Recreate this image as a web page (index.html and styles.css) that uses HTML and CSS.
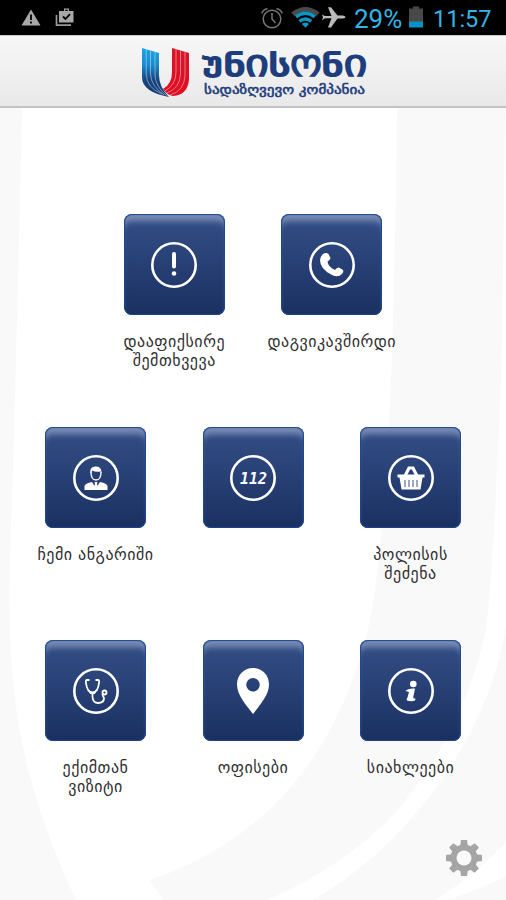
FILE: index.html
```html
<!DOCTYPE html>
<html lang="ka">
<head>
    <meta charset="utf-8">
    <title>უნისონი</title>
    <link rel="stylesheet" href="styles.css">
</head>
<body>
    <div class="statusbar">
        <svg class="status-left" width="60" height="35" viewBox="0 0 60 35">
            <path d="M11 9.500L20.500 25.500H1.500Z" fill="#a8a8a8"/>
            <path d="M11 14.500V20M11 21.500V23.500" stroke="#000" stroke-width="1.800"/>
            <path d="M36.500 15V25.200H51" fill="none" stroke="#999" stroke-width="1.700"/>
            <path d="M39 11H44V8.500H49V11H53.500V22.500H39Z" fill="#a8a8a8"/>
            <path d="M45.200 11V9.700H47.800V11" fill="#000"/>
            <path d="M43 16.500L45.500 19L50 14.200" fill="none" stroke="#000" stroke-width="1.800"/>
        </svg>
        <svg class="status-icons" width="90" height="35" viewBox="0 0 90 35">
            <g fill="none" stroke="#777" stroke-width="1.500">
                <circle cx="12" cy="19" r="8.800"/>
                <path d="M12 13V19L15.500 23M1.800 13.500Q3 9.500 7.500 8.800M16.500 8.800Q21 9.500 22.200 13.500"/>
            </g>
            <path d="M31.300 12.500Q45.500 1.500 59.500 12.500L56.500 16Q45.500 7.500 34.300 16Z" fill="#4a4a4a"/>
            <g fill="none" stroke="#0b96c8" stroke-width="3.400">
                <path d="M36 16.800Q45.500 9.500 54.800 16.800"/>
                <path d="M39.500 21.300Q45.500 16.800 51.200 21.300"/>
            </g>
            <path d="M41.800 24Q45.500 21.200 49 24L45.500 27.700Z" fill="#0b96c8"/>
            <path d="M62 14.500L65 16H71.500L68 7.300H71L77.500 15.500H83Q85.500 16 85.500 17Q85.500 18 83 18.500H77.500L71 27.500H68L71.500 18.300H65L62 20.200L63 17.300Z" fill="#bbb"/>
        </svg>
        <span class="battery-text">29%</span>
        <svg class="battery" width="14" height="35" viewBox="0 0 14 35">
            <path d="M0 8.500H4V6.500H10V8.500H14V22H0Z" fill="#484848"/>
            <path d="M0 21.500H14V27.500H0Z" fill="#0891c4"/>
        </svg>
        <span class="clock">11:57</span>
    </div>

    <div class="header">
        <svg class="logo" width="230" height="60" viewBox="0 0 230 60">
            <defs>
                <linearGradient id="blue" x1="0" y1="0" x2="0" y2="1">
                    <stop offset="0" stop-color="#1ca4e4"/>
                    <stop offset=".35" stop-color="#188acb"/>
                    <stop offset=".65" stop-color="#17457f"/>
                    <stop offset="1" stop-color="#163a72"/>
                </linearGradient>
                <linearGradient id="red" x1="0" y1="0" x2="0" y2="1">
                    <stop offset="0" stop-color="#dc1626"/>
                    <stop offset="1" stop-color="#e20b22"/>
                </linearGradient>
            </defs>
            <path d="M4 6L21 11V33Q21 45 31 55Q4 50 4 35Z" fill="url(#blue)"/>
            <path d="M34 6L51 11V37Q50 53 35 54Q29 53 25 47Q34 42 34 30Z" fill="url(#red)"/>
            <g fill="none" stroke="#dce9f6" stroke-width=".5">
                <path d="M8.200 7V32Q8.500 46 24 52"/>
                <path d="M12.500 9V32Q13 44 26 53"/>
                <path d="M17 10V33Q17.500 45 29 54"/>
                <path d="M38 7V30Q38 43 27 49"/>
                <path d="M42.500 9V32Q42 46 29 51"/>
                <path d="M47 10V34Q46 49 32 53"/>
            </g>
            <text class="logo-name"><tspan class="low" x="65" y="28.500" textLength="19" lengthAdjust="spacingAndGlyphs">უ</tspan><tspan class="high" x="86" y="34" textLength="21" lengthAdjust="spacingAndGlyphs">ნ</tspan><tspan class="mid" x="107" y="34" textLength="24" lengthAdjust="spacingAndGlyphs">ი</tspan><tspan class="high" x="131" y="34" textLength="21" lengthAdjust="spacingAndGlyphs">ს</tspan><tspan class="mid" x="152" y="34" textLength="32" lengthAdjust="spacingAndGlyphs">ო</tspan><tspan class="high" x="184" y="34" textLength="21" lengthAdjust="spacingAndGlyphs">ნ</tspan><tspan class="mid" x="205.500" y="34" textLength="24" lengthAdjust="spacingAndGlyphs">ი</tspan></text>
            <text class="logo-sub" x="66" y="52" textLength="161" lengthAdjust="spacingAndGlyphs">სადაზღვევო კომპანია</text>
        </svg>
    </div>

    <div class="content">
        <svg class="backdrop" width="506" height="792" viewBox="0 108 506 792">
            <g fill="#f9f9f9">
                <path d="M0 108H22Q19 260 12 500C6 650 5 750 76 900H0Z"/>
                <path d="M397 108H505Q503 350 496 560C487 710 400 850 276 900H163L150 880C280 835 340 740 368 630C385 550 394 400 397 108Z"/>
                <path d="M506 626C490 730 405 850 277 900H436Q478 872 506 842Z"/>
                <path d="M506 876V900H447Q480 890 506 876Z"/>
            </g>
            <path d="M503 400L506 400V626C490 735 407 847 313 900H268C390 846 470 750 487 620Q495 540 500 400Z" fill="#fff"/>
        </svg>

        <div class="row">
            <div class="item">
                <div class="tile">
                    <svg width="48" height="48" viewBox="0 0 48 48">
                        <circle class="ring" cx="24" cy="24" r="21.700"/>
                        <path d="M24 13V25.500" stroke="#fff" stroke-width="4" stroke-linecap="round"/>
                        <circle cx="24" cy="32.500" r="2.300" fill="#fff"/>
                    </svg>
                </div>
                <div class="label">დააფიქსირე<br>შემთხვევა</div>
            </div>
            <div class="item">
                <div class="tile">
                    <svg width="48" height="48" viewBox="0 0 48 48">
                        <circle class="ring" cx="24" cy="24" r="21.700"/>
                        <path d="M14.500 13.500Q18 11 20.500 13L22.500 17Q22 19 19.500 20.500Q20 26 27 29Q29 26 31 26.500L35 29Q36 31 34 33Q30 37 24 34Q12 28 12 19Q12.500 15.500 14.500 13.500Z" fill="#fff"/>
                    </svg>
                </div>
                <div class="label">დაგვიკავშირდი</div>
            </div>
        </div>

        <div class="row">
            <div class="item">
                <div class="tile">
                    <svg width="48" height="48" viewBox="0 0 48 48">
                        <circle class="ring" cx="24" cy="24" r="21.700"/>
                        <path d="M18.500 20Q17 13 23 12.500Q30 11.500 29.500 20L28.500 17.500Q23 18.500 20.500 16.500Z" fill="#fff"/>
                        <path d="M19 18Q19 26 24 26Q29 26 29 18" fill="none" stroke="#fff" stroke-width="1.300"/>
                        <path d="M12.500 36V32Q13 29.500 20 28L24 34L28 28Q35 29.500 35.500 32V36Z" fill="#fff"/>
                        <path d="M22.500 28H25.500L25 30L26 33L24 35L22 33L23 30Z" fill="#fff"/>
                    </svg>
                </div>
                <div class="label">ჩემი ანგარიში</div>
            </div>
            <div class="item">
                <div class="tile">
                    <svg width="48" height="48" viewBox="0 0 48 48">
                        <circle class="ring" cx="24" cy="24" r="21.700"/>
                        <text class="number" x="11" y="30" textLength="27" lengthAdjust="spacingAndGlyphs">112</text>
                    </svg>
                </div>
            </div>
            <div class="item">
                <div class="tile">
                    <svg width="48" height="48" viewBox="0 0 48 48">
                        <circle class="ring" cx="24" cy="24" r="21.700"/>
                        <path d="M18 22L22 14H26L30 22" fill="none" stroke="#fff" stroke-width="3.200"/>
                        <path d="M10.500 20.500H37.500V23.500H35.500L33.500 35.500H14.500L12.500 23.500H10.500Z" fill="#fff"/>
                        <path d="M18 26V33M22 26V33M26 26V33M30 26V33" stroke="#3a5184" stroke-width="1"/>
                    </svg>
                </div>
                <div class="label">პოლისის<br>შეძენა</div>
            </div>
        </div>

        <div class="row">
            <div class="item">
                <div class="tile">
                    <svg width="48" height="48" viewBox="0 0 48 48">
                        <circle class="ring" cx="24" cy="24" r="21.700"/>
                        <g fill="none" stroke="#fff" stroke-width="1.800">
                            <path d="M17.500 13H15Q13.500 13 14 16Q15 25 20.500 26Q26 25 27 16Q27.500 13 26 13H23.500"/>
                            <path d="M20.500 26V30Q21 36 26 36Q32 36 32 31Q30.500 29 30.500 27"/>
                            <circle cx="32.500" cy="25.500" r="2"/>
                        </g>
                        <path d="M16 22Q20.500 27 25 22L23 27H18Z" fill="#fff"/>
                    </svg>
                </div>
                <div class="label">ექიმთან<br>ვიზიტი</div>
            </div>
            <div class="item">
                <div class="tile">
                    <svg width="48" height="48" viewBox="0 0 48 48">
                        <path fill-rule="evenodd" d="M24 1C15 1 8 8 8 17.500C8 28 17 38 24 47C31 38 40 28 40 17.500C40 8 33 1 24 1ZM24 11A6.800 6.800 0 1 1 24 24.600A6.800 6.800 0 1 1 24 11Z" fill="#fff"/>
                    </svg>
                </div>
                <div class="label">ოფისები</div>
            </div>
            <div class="item">
                <div class="tile">
                    <svg width="48" height="48" viewBox="0 0 48 48">
                        <circle class="ring" cx="24" cy="24" r="21.700"/>
                        <circle cx="26.300" cy="17" r="3.300" fill="#fff"/>
                        <path d="M18.500 24Q21 21 28 21.500L26.500 29Q25.500 32 28.500 31.500L28 33.500Q24 35 20 33.500Q19 32.500 20.500 30.500L22 25Z" fill="#fff"/>
                    </svg>
                </div>
                <div class="label">სიახლეები</div>
            </div>
        </div>

        <svg class="settings" width="36" height="36" viewBox="-18 -18 36 36">
            <g fill="#a5a5a5">
                <path id="tooth" d="M-4 -10L-3 -18H3L4 -10V10L3 18H-3L-4 10Z"/>
                <use href="#tooth" transform="rotate(45)"/>
                <use href="#tooth" transform="rotate(90)"/>
                <use href="#tooth" transform="rotate(135)"/>
                <circle r="13.500"/>
            </g>
            <circle r="7.500" fill="#fafafa"/>
        </svg>
    </div>
</body>
</html>
```

FILE: styles.css
```css
body {
    margin: 0;
    width: 506px;
    height: 900px;
    overflow: hidden;
    background-color: #fff;
    font-family: "DejaVu Sans", sans-serif;
}
.statusbar {
    height: 35px;
    display: flex;
    align-items: center;
    background-color: #000;
    color: #33b5e5;
    font-family: Roboto, sans-serif;
    white-space: nowrap;
}
.status-left {
    margin-left: 20px;
}
.status-icons {
    margin-left: 180px;
}
.battery-text {
    width: 55px;
    padding-top: 3px;
    margin-left: 4px;
    font-size: 26px;
}
.clock {
    margin-left: 10px;
    padding-top: 2px;
    font-size: 23.500px;
}
.header {
    height: 73px;
    display: flex;
    box-sizing: border-box;
    padding: 6px 0 0 138px;
    border-top: 1px solid #c8c8c8;
    border-bottom: 2px solid #c3c3c3;
    background: linear-gradient(#f7f7f7, #e9e9e9);
}
.logo {
    overflow: visible;
}
.logo-name {
    fill: #1d3d7c;
    stroke: #1d3d7c;
    stroke-width: 2px;
}
.low {
    font-size: 26px;
}
.high {
    font-size: 29px;
}
.mid {
    font-size: 38px;
    stroke-width: 1.200px;
}
.logo-sub {
    font-size: 12px;
    fill: #1d3d7c;
    stroke: #1d3d7c;
    stroke-width: .5px;
}
.content {
    position: relative;
    height: 792px;
    box-sizing: border-box;
    padding-top: 106px;
}
.backdrop {
    position: absolute;
    top: 0;
    left: 0;
    z-index: -1;
}
.row {
    display: flex;
    justify-content: center;
    height: 213px;
}
.item {
    width: 157.500px;
    display: flex;
    flex-direction: column;
    align-items: center;
}
.tile {
    width: 101px;
    height: 101px;
    display: flex;
    align-items: center;
    justify-content: center;
    border-radius: 8px;
    background: linear-gradient(#344f87, #1a3061);
    box-shadow: inset 0 0 1px 1px #1b4690, inset 0 10px 6px -3px rgba(170, 184, 215, .6);
}
.ring {
    fill: none;
    stroke: #fff;
    stroke-width: 2.600;
}
.number {
    font-family: "DejaVu Sans Mono", monospace;
    font-size: 16px;
    font-style: italic;
    font-weight: bold;
    fill: #fff;
}
.label {
    margin-top: 17px;
    font-size: 16px;
    letter-spacing: .5px;
    line-height: 19px;
    color: #303030;
    text-align: center;
    white-space: nowrap;
}
.settings {
    position: absolute;
    right: 24px;
    bottom: 24px;
}
```
